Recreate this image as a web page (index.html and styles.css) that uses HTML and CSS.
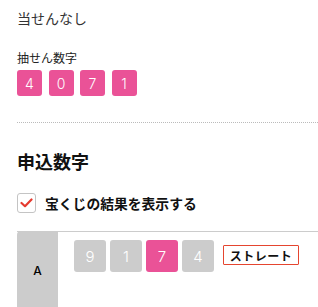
FILE: index.html
```html
<!DOCTYPE html>
<html lang="ja">
<head>
    <meta charset="UTF-8">
    <meta name="viewport" content="width=device-width, initial-scale=1.0">
    <title>当せん結果</title>
    <link rel="stylesheet" href="styles.css">
</head>
<body>
    <div class="page">
        <!-- Result -->
        <p class="result">当せんなし</p>

        <div class="draw">
            <p class="draw-label">抽せん数字</p>
            <ul class="digits digits-small">
                <li class="digit hit">4</li>
                <li class="digit hit">0</li>
                <li class="digit hit">7</li>
                <li class="digit hit">1</li>
            </ul>
        </div>

        <hr class="divider">

        <!-- Entry numbers -->
        <h2 class="entry-title">申込数字</h2>

        <label class="toggle">
            <span class="checkbox">
                <svg width="13" height="10" viewBox="0 0 13 10">
                    <polyline points="1.5,5 5,8.2 11.5,1.5" fill="none" stroke="#e53a2f" stroke-width="2.2" stroke-linecap="round" stroke-linejoin="round"/>
                </svg>
            </span>
            宝くじの結果を表示する
        </label>

        <div class="entry-table">
            <div class="entry-row">
                <div class="row-head">A</div>
                <div class="row-body">
                    <ul class="digits">
                        <li class="digit">9</li>
                        <li class="digit">1</li>
                        <li class="digit hit">7</li>
                        <li class="digit">4</li>
                    </ul>
                    <span class="badge">ストレート</span>
                </div>
            </div>
        </div>
    </div>
</body>
</html>
```

FILE: styles.css
```css
* {
    margin: 0;
    padding: 0;
    box-sizing: border-box;
    font-family: "Noto Sans CJK JP", "Noto Sans", sans-serif;
}

body {
    background-color: #fff;
    color: #222;
    overflow: hidden;
}

.page {
    padding-left: 17px;
}

/* Result */
.result {
    margin-top: 8px;
    font-size: 14px;
    line-height: 20px;
    color: #333;
}

.draw-label {
    margin-top: 22px;
    font-size: 12px;
    line-height: 16px;
    color: #222;
}

/* Digit boxes */
.digits {
    display: flex;
    gap: 4px;
    list-style: none;
}

.digit {
    width: 32px;
    height: 32px;
    display: flex;
    align-items: center;
    justify-content: center;
    background-color: #cccccc;
    border-radius: 3px;
    color: #fff;
    font-family: "Inter", "Noto Sans", sans-serif;
    font-size: 15px;
    font-weight: 300;
}

.digit.hit {
    background-color: #ea5297;
}

.digits-small {
    margin-top: 4px;
    gap: 6.5px;
}

.digits-small .digit {
    width: 25px;
    height: 26px;
    font-size: 14px;
}

.divider {
    margin-top: 26px;
    border: none;
    border-top: 1px dotted #bbb;
}

/* Entry numbers */
.entry-title {
    margin-top: 26px;
    font-size: 18px;
    line-height: 24px;
    font-weight: bold;
    color: #111;
}

.toggle {
    margin-top: 20px;
    display: flex;
    align-items: center;
    gap: 9px;
    font-size: 13.8px;
    font-weight: bold;
    line-height: 20px;
    color: #111;
}

.checkbox {
    width: 19px;
    height: 20px;
    display: flex;
    align-items: center;
    justify-content: center;
    border: 1px solid #c4c4c4;
    border-radius: 3px;
    background-color: #fff;
}

.entry-table {
    margin-top: 18px;
    border-top: 1px solid #cccccc;
}

.entry-row {
    display: flex;
    min-height: 76px;
}

.row-head {
    width: 41px;
    margin-top: -1px;
    display: flex;
    align-items: center;
    justify-content: center;
    padding-top: 1px;
    background-color: #cccccc;
    border-radius: 4px 0 0 0;
    font-family: "Inter", "Noto Sans", sans-serif;
    font-size: 12px;
    font-weight: 500;
    color: #000;
}

.row-body {
    display: flex;
    align-items: flex-start;
    padding: 8px 0 0 16px;
}

.badge {
    margin: 5px 0 0 9px;
    width: 76px;
    height: 20px;
    display: flex;
    align-items: center;
    justify-content: center;
    border: 1px solid #e5452f;
    border-radius: 1px;
    font-size: 12px;
    font-weight: bold;
    letter-spacing: 0.5px;
    color: #111;
}
```
